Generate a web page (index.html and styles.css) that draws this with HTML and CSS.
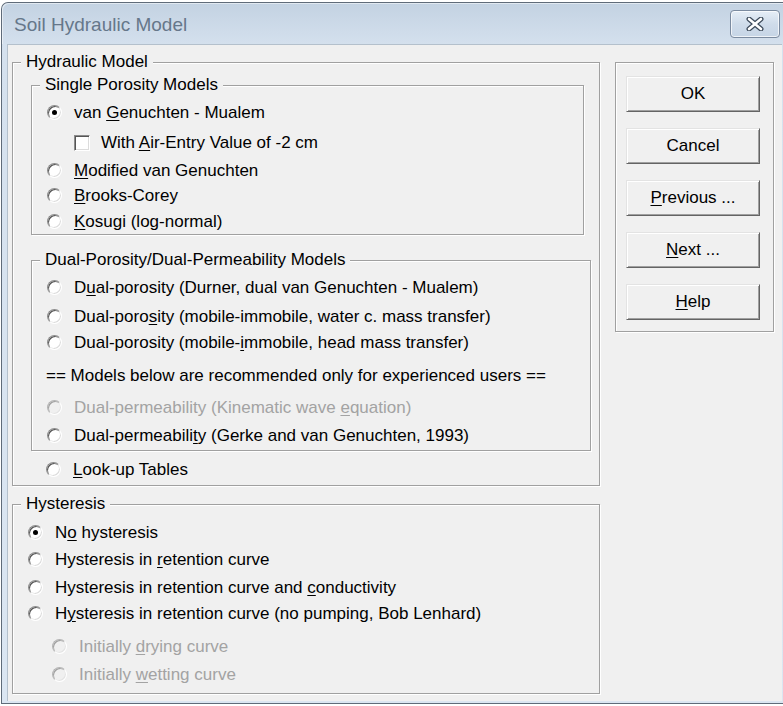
FILE: index.html
```html
<!DOCTYPE html>
<html lang="en">
<head>
<meta charset="utf-8">
<title>Soil Hydraulic Model</title>
<link rel="stylesheet" href="styles.css">
</head>
<body>
<div class="window">
  <div class="titlebar">
    <span class="title">Soil Hydraulic Model</span>
    <span class="close" aria-label="Close">
      <svg width="18" height="14" viewBox="0 0 18 14">
        <path d="M3 2 L15 12 M15 2 L3 12" stroke="#3c4a5a" stroke-width="5" stroke-linecap="round" fill="none"/>
        <path d="M3 2 L15 12 M15 2 L3 12" stroke="#ffffff" stroke-width="2.6" stroke-linecap="round" fill="none"/>
      </svg>
    </span>
  </div>
  <div class="client">
    <div class="left">
      <fieldset class="group hydraulic">
        <legend>Hydraulic Model</legend>
        <fieldset class="group single inner">
          <legend>Single Porosity Models</legend>
          <div class="row"><span class="radio checked"></span><span class="label">van <u>G</u>enuchten - Mualem</span></div>
          <div class="row check-row m5"><span class="check"></span><span class="label">With <u>A</u>ir-Entry Value of -2 cm</span></div>
          <div class="row m3"><span class="radio"></span><span class="label"><u>M</u>odified van Genuchten</span></div>
          <div class="row"><span class="radio"></span><span class="label"><u>B</u>rooks-Corey</span></div>
          <div class="row m1"><span class="radio"></span><span class="label"><u>K</u>osugi (log-normal)</span></div>
        </fieldset>
        <fieldset class="group dual inner">
          <legend>Dual-Porosity/Dual-Permeability Models</legend>
          <div class="row"><span class="radio"></span><span class="label">D<u>u</u>al-porosity (Durner, dual van Genuchten - Mualem)</span></div>
          <div class="row m4"><span class="radio"></span><span class="label">Dual-poro<u>s</u>ity (mobile-immobile, water c. mass transfer)</span></div>
          <div class="row m1"><span class="radio"></span><span class="label">Dual-porosity (mobile-<u>i</u>mmobile, head mass transfer)</span></div>
          <div class="row note m8"><span class="label">== Models below are recommended only for experienced users ==</span></div>
          <div class="row m7 disabled"><span class="radio"></span><span class="label">Dual-permeability (Kinematic wave <u>e</u>quation)</span></div>
          <div class="row m3"><span class="radio"></span><span class="label">Dual-permeabili<u>t</u>y (Gerke and van Genuchten, 1993)</span></div>
        </fieldset>
        <div class="row lookup"><span class="radio"></span><span class="label"><u>L</u>ook-up Tables</span></div>
      </fieldset>
      <fieldset class="group hysteresis inner">
        <legend>Hysteresis</legend>
        <div class="row"><span class="radio checked"></span><span class="label">N<u>o</u> hysteresis</span></div>
        <div class="row m2"><span class="radio"></span><span class="label">Hysteresis in <u>r</u>etention curve</span></div>
        <div class="row m3"><span class="radio"></span><span class="label">Hysteresis in retention curve and <u>c</u>onductivity</span></div>
        <div class="row m1"><span class="radio"></span><span class="label">H<u>y</u>steresis in retention curve (no pumping, Bob Lenhard)</span></div>
        <div class="row sub m8 disabled"><span class="radio"></span><span class="label">Initially <u>d</u>rying curve</span></div>
        <div class="row sub m3 disabled"><span class="radio"></span><span class="label">Initially <u>w</u>etting curve</span></div>
      </fieldset>
    </div>
    <div class="right">
      <div class="buttons">
        <button class="btn" type="button">OK</button>
        <button class="btn" type="button">Cancel</button>
        <button class="btn" type="button"><u>P</u>revious ...</button>
        <button class="btn" type="button"><u>N</u>ext ...</button>
        <button class="btn" type="button"><u>H</u>elp</button>
      </div>
    </div>
  </div>
</div>
</body>
</html>
```

FILE: styles.css
```css
html, body {
  margin: 0;
  padding: 0;
  background: #ffffff;
}

body {
  font-family: "Liberation Sans", Arial, sans-serif;
  font-size: 17px;
  color: #000;
}

.window {
  box-sizing: border-box;
  margin: 2px 0 0 1px;
  width: 782px;
  height: 702px;
  border: 1px solid #5f6b79;
  border-right: none;
  border-radius: 7px 0 0 0;
  background: linear-gradient(#c3d2e2 0px, #d5e1ee 44px, #dbe6f2 100%);
  display: flex;
  flex-direction: column;
}

.titlebar {
  height: 41px;
  flex: none;
  display: flex;
  align-items: center;
  justify-content: space-between;
  padding: 0 3px 0 12px;
  border-radius: 6px 0 0 0;
  box-shadow: inset 1px 1px 0 rgba(255, 255, 255, 0.5);
}

.title {
  font-size: 19px;
  color: #66778a;
  padding-top: 2px;
}

.close {
  box-sizing: border-box;
  width: 50px;
  height: 28px;
  margin-top: 1px;
  border: 1px solid #7b8ba0;
  border-radius: 4px;
  background: linear-gradient(#e6eef7, #cfdcea 50%, #c6d5e6);
  box-shadow: inset 0 0 0 1px rgba(255, 255, 255, 0.7);
  display: flex;
  align-items: center;
  justify-content: center;
}

.client {
  box-sizing: border-box;
  flex: none;
  margin-left: 5px;
  width: 775px;
  height: 657px;
  background: #f0f0f0;
  border-top: 1px solid #b4c0cc;
  border-left: 1px solid #b4c0cc;
  display: grid;
  grid-template-columns: 588px 159px;
  column-gap: 15px;
  align-items: start;
  padding-left: 4px;
}

.left {
  display: flex;
  flex-direction: column;
}

/* etched group boxes */
.group {
  margin: 0;
  padding: 0;
  min-width: 0;
  border: 1px solid #a0a0a0;
  box-shadow: inset 1px 1px 0 #ffffff, 1px 1px 0 #ffffff;
}

.group > legend {
  margin-left: 8px;
  padding: 0 5px;
  line-height: 20px;
  height: 20px;
  background: #f0f0f0;
}

/* groups whose content is indented by 15px: keep the caption at 8px */
.inner > legend {
  margin-left: -7px;
}

.hydraulic {
  margin-top: 7px;
  padding-bottom: 3px;
}

.single {
  margin: 3px 15px 0 18px;
  padding: 5px 0 0 15px;
}

.dual {
  margin: 15px 8px 0 18px;
  padding: 5px 0 2px 15px;
}

.hysteresis {
  margin-top: 8px;
  padding: 6px 0 6px 15px;
}

.row {
  height: 25px;
  display: flex;
  align-items: center;
  white-space: nowrap;
}

.m1 { margin-top: 1px; }
.m2 { margin-top: 2px; }
.m3 { margin-top: 3px; }
.m4 { margin-top: 4px; }
.m5 { margin-top: 5px; }
.m7 { margin-top: 7px; }
.m8 { margin-top: 8px; }

.lookup {
  margin: 6px 0 0 33px;
}

.note {
  margin-left: -1px;
}

.check-row {
  padding-left: 27px;
}

.sub {
  padding-left: 24px;
}

.label {
  margin-left: 12px;
  line-height: 20px;
}

.note .label {
  margin-left: 0;
}

.check-row .label {
  margin-left: 11px;
}

u {
  text-decoration-thickness: 1px;
  text-underline-offset: 2px;
}

.radio {
  box-sizing: border-box;
  flex: none;
  width: 15px;
  height: 15px;
  border-radius: 50%;
  border: 1px solid;
  border-color: #8c8c8c #ffffff #ffffff #8c8c8c;
  box-shadow: inset 1px 1px 0 #555555, inset -1px -1px 0 #dcdcdc;
  background: #ffffff;
  display: flex;
  align-items: center;
  justify-content: center;
}

.radio.checked::after {
  content: "";
  width: 5px;
  height: 5px;
  border-radius: 50%;
  background: #000;
}

.check {
  box-sizing: border-box;
  flex: none;
  width: 16px;
  height: 16px;
  border: 1px solid;
  border-color: #8c8c8c #ffffff #ffffff #8c8c8c;
  box-shadow: inset 1px 1px 0 #555555, inset -1px -1px 0 #dcdcdc;
  background: #ffffff;
}

.disabled .label {
  color: #a3a3a3;
}

.disabled .radio {
  border-color: #b4b4b4 #ffffff #ffffff #b4b4b4;
  box-shadow: inset 1px 1px 0 #a0a0a0, inset -1px -1px 0 #e4e4e4;
  background: #f0f0f0;
}

.right {
  padding-top: 17px;
}

.buttons {
  box-sizing: border-box;
  width: 159px;
  height: 270px;
  border: 1px solid #a0a0a0;
  box-shadow: inset 1px 1px 0 #ffffff, 1px 1px 0 #ffffff;
  padding: 13px 0 0 10px;
  display: flex;
  flex-direction: column;
  gap: 16px;
}

.btn {
  box-sizing: border-box;
  width: 134px;
  height: 36px;
  margin: 0;
  padding: 0;
  font: inherit;
  color: #000;
  background: #f0f0f0;
  border: 1px solid;
  border-color: #e3e3e3 #646464 #646464 #e3e3e3;
  box-shadow: inset 1px 1px 0 #ffffff, inset -1px -1px 0 #a0a0a0;
  border-radius: 0;
}
```
